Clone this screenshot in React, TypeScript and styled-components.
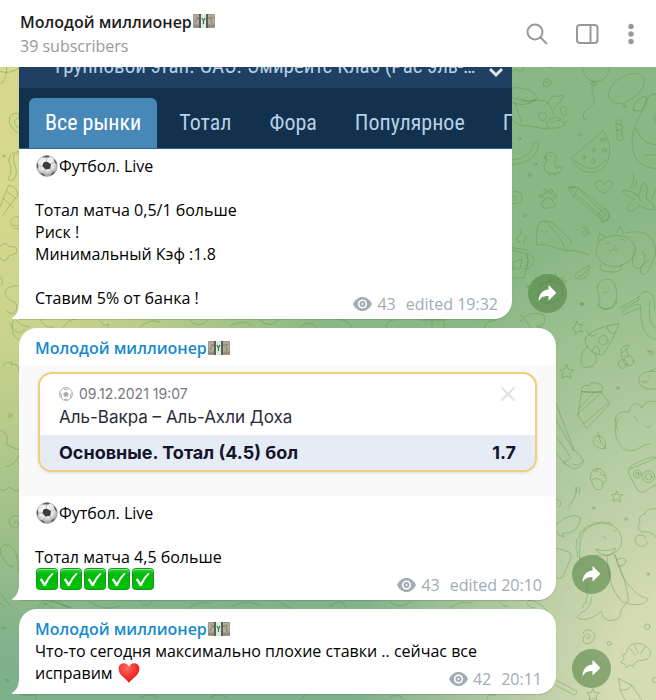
import React from "react";
import styled, { createGlobalStyle } from "styled-components";

const GlobalStyle = createGlobalStyle`
  * { box-sizing: border-box; }
  html, body, #root { height: 100%; }
  body { margin: 0; overflow: hidden; font-family: "Open Sans", "Noto Sans", sans-serif; font-size: 16px; line-height: 22px; color: #000; }
  button { font: inherit; border: 0; padding: 0; background: none; cursor: pointer; }
`;

const Page = styled.div`
  display: flex;
  flex-direction: column;
  height: 100vh;
  overflow: hidden;
`;

const Header = styled.header`
  display: flex;
  align-items: center;
  justify-content: space-between;
  height: 67px;
  flex: none;
  padding: 0 19px 0 20px;
  background: #fff;
`;

const ChannelTitle = styled.h1`
  margin: 0;
  font-size: 16px;
  line-height: 24px;
  font-weight: 600;
  color: #1c1c1c;
`;

const Subscribers = styled.p`
  margin: 0;
  line-height: 24px;
  color: #999;
`;

const Actions = styled.nav`
  display: flex;
  align-items: center;
  gap: 26px;
`;

const IconButton = styled.button`
  display: flex;
  color: #999;
`;

const Chat = styled.main`
  position: relative;
  flex: 1;
  min-height: 0;
  overflow: hidden;
  background:
    radial-gradient(ellipse 54% 82% at 0% 10%, #d5d88d 15%, rgba(213, 216, 141, 0.85) 40%, rgba(213, 216, 141, 0) 100%),
    radial-gradient(ellipse 50% 78% at 104% 100%, #d5dbb2 22%, rgba(213, 219, 178, 0) 100%),
    linear-gradient(#89b884 45%, #7eb08c);
`;

const Doodles = styled.svg<{ $side: "left" | "right" }>`
  position: absolute;
  top: 0;
  ${(p) => p.$side}: 0;
  fill: none;
  stroke: #4f8b3d;
  stroke-opacity: 0.36;
  stroke-width: 3;
  stroke-linecap: round;
  stroke-linejoin: round;
`;

const Messages = styled.div`
  position: relative;
  display: flex;
  flex-direction: column;
  gap: 9px;
  padding: 0 45px 6px 19px;
`;

const MessageRow = styled.article`
  display: flex;
  align-items: flex-end;
  gap: 16px;
`;

const Bubble = styled.div<{ $narrow?: boolean; $continued?: boolean }>`
  position: relative;
  width: 100%;
  max-width: ${(p) => (p.$narrow ? 493 : 537)}px;
  background: #fff;
  border-radius: ${(p) => (p.$continued ? "0 0 18px 0" : "18px 18px 18px 0")};
  box-shadow: 0 1px 1px rgba(60, 100, 60, 0.25);
`;

const Tail = styled.svg`
  position: absolute;
  left: -7px;
  bottom: 0;
  fill: #fff;
`;

const Author = styled.h2`
  margin: 0;
  padding: 9px 17px 0 16px;
  font-size: 16px;
  line-height: 22px;
  font-weight: 600;
  color: #168acd;
`;

const Text = styled.div<{ $spaced?: boolean }>`
  padding: ${(p) => (p.$spaced ? 6 : 0)}px 17px 0 16px;
  line-height: 22px;
`;

const Line = styled.p`
  margin: 0;
  min-height: 22px;
`;

const EmojiSvg = styled.svg`
  display: inline-block;
  width: 22px;
  height: 22px;
  margin: 0 1px;
  vertical-align: top;
`;

const Meta = styled.footer`
  display: flex;
  align-items: center;
  justify-content: flex-end;
  gap: 10px;
  margin-top: -16px;
  padding: 0 14px 4px;
  color: #a0acb6;
`;

const Views = styled.span`
  display: flex;
  align-items: center;
  gap: 5px;
`;

const ShareButton = styled.button`
  display: flex;
  align-items: center;
  justify-content: center;
  flex: none;
  width: 39px;
  height: 39px;
  margin-bottom: 6px;
  border-radius: 50%;
  background: rgba(77, 126, 62, 0.55);
  color: #fff;
`;

const Sportsbook = styled.section`
  font-family: "Roboto Condensed", Roboto, sans-serif;
  font-size: 22px;
  background: #12314e;
  color: #b7cfe3;
  overflow: hidden;
`;

const Tournament = styled.div`
  display: flex;
  align-items: flex-end;
  justify-content: space-between;
  height: 21px;
  padding: 0 9px 9px 36px;
  background: #1f3f63;
  font-size: 21px;
  line-height: 26px;
  white-space: nowrap;
`;

const Markets = styled.div`
  display: flex;
  gap: 6px;
  padding: 10px 0 0 10px;
  height: 61px;
  border-bottom: 1px solid #2d6a9a;
  white-space: nowrap;
`;

const Market = styled.button<{ $active?: boolean }>`
  flex: none;
  padding: 0 16px;
  border-radius: 6px 6px 0 0;
  background: ${(p) => (p.$active ? "#4888b9" : "transparent")};
  color: ${(p) => (p.$active ? "#fff" : "#b7cfe3")};
`;

const BetPhoto = styled.section`
  margin-top: 6px;
  padding: 7px 19px 24px;
  background: #f9f9f9;
  font-family: Inter, sans-serif;
`;

const BetCard = styled.div`
  overflow: hidden;
  height: 100px;
  border: 2px solid #efce7c;
  border-radius: 14px;
  background: #fff;
  box-shadow: 0 1px 3px rgba(0, 0, 0, 0.12);
`;

const BetTop = styled.div`
  display: flex;
  justify-content: space-between;
  height: 61px;
  padding: 9px 19px 0 19px;
`;

const BetDate = styled.div`
  display: flex;
  align-items: center;
  gap: 6px;
  font-size: 14px;
  color: #77777f;
`;

const Teams = styled.div`
  font-size: 17px;
  line-height: 24px;
  color: #2b2b3a;
`;

const CloseButton = styled.button`
  align-self: flex-start;
  display: flex;
  padding: 3px 0;
  color: #e2e2e2;
`;

const BetOutcome = styled.div`
  display: flex;
  justify-content: space-between;
  align-items: center;
  height: 35px;
  padding: 0 19px;
  background: #e6ecf5;
  font-size: 18px;
  font-weight: 700;
  color: #14142b;
`;

function Money() {
  return (
    <EmojiSvg viewBox="0 0 22 22" role="img" aria-label="dollar banknotes">
      <rect x="0" y="4" width="22" height="14" rx="1" fill="#a0968a" />
      <rect x="1" y="5" width="20" height="10" fill="#b5ab9c" />
      <path d="M2 13c1-4 3-5 5-5M3 7l3 2M15 8c3 0 4 3 4 6M17 7l3 1" stroke="#80755f" strokeWidth="1" fill="none" />
      <path d="M0 16.500h22M0 15h22" stroke="#8b806c" strokeWidth=".7" />
      <rect x="6" y="4" width="9" height="14" fill="#56605a" />
      <rect x="8" y="4" width="5" height="14" fill="#dcecdc" />
      <path d="M9 8l1.500 3L12 8M10.500 11v3" stroke="#47704b" strokeWidth="1.200" fill="none" />
    </EmojiSvg>
  );
}

function Ball() {
  return (
    <EmojiSvg viewBox="0 0 22 22" role="img" aria-label="football">
      <defs>
        <radialGradient id="ballShade" cx=".45" cy=".35" r=".65">
          <stop offset="0" stopColor="#fff" />
          <stop offset=".6" stopColor="#e4e4e4" />
          <stop offset="1" stopColor="#999" />
        </radialGradient>
      </defs>
      <circle cx="11" cy="11" r="10.4" fill="url(#ballShade)" stroke="#8d8d8d" strokeWidth=".5" />
      <path d="M10.500 6.500l4.500 2.500-.8 4.800-4.800.8L6.300 11l1.200-3.500z" fill="#3c3c3c" />
      <path d="M6 2.200Q10-.4 14 1.200L12.500 2.400 8.500 2.600zM18 4q2.800 2.500 3 6l-1.600-1.600-1.500-3zM1 8.500L2 8l.4 4-1 2Q.4 11.500 1 8.500zM4 17.800l2.600.6 2.300 1.800-.5 1Q6 20.700 4 17.800zM15.500 18.300l2.800-1.800.8.300q-1.300 2.700-3.800 3.700z" fill="#5a5a5a" />
      <path d="M10.500 6.500V3M15 9l3-1.500M14.200 13.800l2 3.400M9.400 14.600L8 18.400M6.300 11H3" stroke="#aaa" strokeWidth=".7" />
    </EmojiSvg>
  );
}

function Check() {
  return (
    <EmojiSvg viewBox="0 0 22 22" role="img" aria-label="done">
      <defs>
        <linearGradient id="checkFill" x2="0" y2="1">
          <stop offset="0" stopColor="#35cf3f" />
          <stop offset=".3" stopColor="#00b90a" />
          <stop offset="1" stopColor="#00c400" />
        </linearGradient>
      </defs>
      <rect x=".5" y=".5" width="21" height="21" rx="3" fill="url(#checkFill)" stroke="#119a1b" />
      <path d="M1.500 3.500q0-2 2-2h15q2 0 2 2" stroke="#7fe487" fill="none" />
      <path d="M3.800 11.500l2-1.300 3 4.500q3-6.200 7.300-9.700l1.500.8Q12.500 11 9.600 18L8 18.200z" fill="#fff" />
    </EmojiSvg>
  );
}

function Heart() {
  return (
    <EmojiSvg viewBox="0 0 22 22" role="img" aria-label="heart">
      <defs>
        <radialGradient id="heartFill" cx=".4" cy=".25" r=".8">
          <stop offset="0" stopColor="#ff6d5e" />
          <stop offset=".55" stopColor="#f3332f" />
          <stop offset="1" stopColor="#c9141b" />
        </radialGradient>
      </defs>
      <path d="M11 20.800C8 16.500 1 13.800.6 7 .3 3.500 2.800 1.200 5.800 1.200 8.200 1.200 10.300 2.600 11 5c.7-2.400 2.800-3.800 5.200-3.800 3 0 5.500 2.300 5.200 5.800-.4 6.800-7.400 9.500-10.400 13.800z" fill="url(#heartFill)" />
    </EmojiSvg>
  );
}

function MessageMeta({ views, edited, time }: { views: number; edited?: boolean; time: string }) {
  return (
    <Meta>
      <Views>
        <svg width="19" height="14" viewBox="0 0 19 14" aria-label="views">
          <path d="M0 7C2 2.700 5.500 0 9.500 0S17 2.700 19 7c-2 4.300-5.500 7-9.500 7S2 11.300 0 7z" fill="#a0acb6" />
          <circle cx="9.500" cy="7" r="4.600" fill="#fff" />
          <circle cx="9.500" cy="7" r="3" fill="#a0acb6" />
          <circle cx="9.500" cy="7" r="1" fill="#fff" />
        </svg>
        {views}
      </Views>
      <time>{edited ? `edited ${time}` : time}</time>
    </Meta>
  );
}

function Share() {
  return (
    <ShareButton aria-label="Share">
      <svg width="19" height="17" viewBox="0 0 19 17" fill="currentColor">
        <path d="M10.500.8Q10.500 0 11.200.6l6.600 6.600q.6.6 0 1.200l-6.600 6.500q-.7.600-.7-.2v-3.600C6 11 3 12.500 1.400 15.200.8 16 .400 15.700.5 15 1.200 8.500 5 5 10.500 4.500z" />
      </svg>
    </ShareButton>
  );
}

function BubbleTail() {
  return (
    <Tail width="8" height="18" viewBox="0 0 8 18" aria-hidden="true">
      <path d="M8 0H7v2C7 9 5 14 .5 16.500Q-.5 18 1 18h7z" />
    </Tail>
  );
}

function RightDoodles() {
  return (
    <Doodles $side="right" width="146" height="633" viewBox="510 67 146 633" aria-hidden="true">
      <g transform="translate(510 60) scale(.33333)">
        <path d="M4 34l16-5 10 8 12-6-4-10M114 20q10 8 18 0M100 62c8-10 26-4 22 8s-22 14-22 2 14-10 12-2" />
        <path d="M217 20c0 25 20 45 41 45s41-20 41-45M246 66l8 0 6 10-18-2 6-9M250 75c-12 20 6 30 3 48s-32 26-33 42 6 14 10 14" />
        <path d="M336 130c-30 4-46-14-38-38s40-52 76-52 34 34 14 58q-18 22-40 26l-2 18zM322 112h1M340 94h1M364 72h1M384 68h1M360 100h1" />
        <path d="M0 85c30-6 74 4 80 24s-40 14-80 2M0 125q40 20 76-4M14 125l20 62M36 122l22 4 20-6 28 2q20 16 26 44M108 132q10-4 20-24 18 4 33-4-4 18-32 44M0 172q20 30 60 26l50 10" />
        <path d="M110 186q20-24 46-6l8 14q-14 14-48 10zM98 182l-10-8q-6-18 10-18 14 2 10 20zM160 168q-12-14-6-28 20-8 14 22zM116 206l-8-2M162 190l14-8M122 186q6 5 10 0M140 182q6 4 10-1" />
        <path d="M317 185q8-12 18 0l-4 8q12 6 2 16 10 8 2 14l6 12q-8 12-20 2l2-14q-10-6 0-16-10-8-2-14zM320 192l14 3M318 210l16 3" />
        <path d="M278 212L184 295c20 50 80 52 100 24s22-72-6-107zM190 296c40 42 78 34 98 2" />
        <ellipse cx="279" cy="239" rx="7" ry="4" /><ellipse cx="283" cy="271" rx="6" ry="5" /><ellipse cx="251" cy="271" rx="4" ry="6" /><ellipse cx="221" cy="292" rx="4" ry="7" /><ellipse cx="250" cy="304" rx="5" ry="7" />
        <path d="M438 102q-24-2-30 28l-30 60c-30 80 0 135 60 135M370 150q-3-16 14-28 16-20 26-10 0 12-12 38-18 6-28 0zM378 206q20 48 60 48M404 285h34M438 165q-10 18 0 24" />
        <circle cx="209" cy="224" r="5" /><circle cx="28" cy="236" r="4" /><circle cx="76" cy="313" r="4" /><circle cx="59" cy="345" r="5" /><circle cx="45" cy="466" r="5" /><circle cx="52" cy="679" r="4" /><circle cx="215" cy="732" r="4" />
        <path d="M0 300c40 0 68-20 70-53h16c-2 45-36 67-86 66M110 303q-10-30 16-26 20 10 8 28 8 18 22 14c4 12-14 26-30 22-26 0-30-24-16-38zM110 288l-10 4 10 6M118 342v9M134 342v9M132 318q6 10 16 4M124 290h1" />
        <path d="M283 400c-60-26-6-54 0-26 14-26 46-4 0 26zM100 422c8-16 28-10 30 6 10 8 4 18-6 14-24 8-38-2-24-20z" />
        <ellipse cx="93" cy="409" rx="5" ry="6" /><ellipse cx="106" cy="395" rx="5" ry="7" /><ellipse cx="123" cy="394" rx="5" ry="7" /><ellipse cx="135" cy="408" rx="5" ry="6" />
        <path d="M176 382l28 0 90 72-18 24-86-70zM204 382l-12 26M208 390l76 70M196 402l82 70M294 454c10 14-6 32-20 30l-6-10M286 446q-20 4-22 24M298 462q4 20-20 24M180 383l8 8 5-10z" />
        <path d="M0 400c20-14 40 0 36 16s-22 18-36 12M0 410c20-6 24 8 12 12" />
        <path d="M370 340q4 26-8 44M380 364q0 14-10 22M338 392q20-4 50 16 2-30 14-38c12 2 10 20 6 46 20 10 26 22 24 32-12 4-32-6-46-12-10 14-22 20-30 16-8-10 8-26 16-34-14-6-32-14-34-26zM376 404q10 4 18 20M438 390l-14 26" />
        <path d="M80 552q-4-46 10-66 34-10 50 16 18 10 46 44l-14 16M106 484q36 30 64 88M94 514q10 8 16 0M76 556q30-6 50 4l46 14q26-6 38 4 16 0 26 6M216 504c8-6 24 0 20 14s-26 8-18-2 14-2 10 2" />
        <path d="M30 506q10 12-4 22t6 22M46 524q6 10-2 18t0 12M0 570l52 12q4 40-12 72H0M0 562l52 8M50 582c20-4 26 22 14 36-8 10-18 10-20 8M50 592c12 0 10 24-2 26M10 606l26-8-6 30-10-6-10 8z" />
        <path d="M268 544c16-20 84-30 104 10 20 38-30 66-60 66-40-2-70-40-44-76zM264 542l4-24 16 12M318 520l12-20 12 22M288 552q8-8 14 0M330 540q8-8 14 0M314 556l-4 12q-8 8-14 4M310 568q8 8 14-2M348 518q50-10 70 12 26 26 16 60c-14 44-30 60-42 50q-6-24 26-40M374 568q-16 50 6 58 20 2 24-26 4-14-6-26M272 614c-10 18 10 22 34 22s34-10 26-22" />
        <path d="M196 648q4-16 20-18l22-14q-2 36-20 40-10 4-24-2M206 650q14 0 26-22M262 680c6-30 50-30 54 0 10 24 0 66-22 66-20 0-32-6-30-16 6 2 8-20 2-28-4-8-4-14-4-22zM280 686h1M296 684h1M282 696q6 8 12 0M384 722q2-24 24-28 30 4 26 56M388 710l-60 35M388 720l-50 26" />
        <path d="M92 672q20-16 60 0c24 36-20 60-40 58-30-6-34-30-20-58zM92 672l34-10-10-14 16 12 4-20 8 20 16-10-4 14 14-2-14 10M100 690h2M120 684h2M140 690h2M110 710h2" />
      </g>
      <g transform="translate(520 300) scale(.33333)">
        <path d="M236 14q8 18 30 14 24-10 24-28M304 40q40-36 58-26M310 44l52-20M362 20c0 60 10 90 46 98M390 0q-10 70 18 86" />
        <circle cx="185" cy="12" r="4" /><circle cx="294" cy="264" r="4" /><circle cx="220" cy="624" r="4" /><circle cx="318" cy="657" r="4" /><circle cx="384" cy="822" r="4" /><circle cx="382" cy="980" r="8" /><circle cx="268" cy="1030" r="6" /><circle cx="405" cy="1140" r="8" />
        <path d="M170 64l6 10 12-1-7 11 6 11-12-2-8 10-2-13-10-6 11-6zM140 194l5 14 16 2-12 10 4 14-14-6-12 6 2-15-8-10 13-2zM290 574l4 10 14 0-10 9 3 12-12-6-10 5 2-12-6-8 11-1z" />
        <path d="M196 114q24-32 102-44-18 50-50 96l-24-6q-34-20-28-46zM200 92q14 30 32 8M262 78q0 28 24 22M216 156c2-26 28-20 22 6" /><circle cx="250" cy="121" r="14" />
        <path d="M204 140c-26 14-28 60-8 62 32 4 40-28 28-44" />
        <circle cx="308" cy="192" r="13" /><circle cx="326" cy="183" r="15" />
        <path d="M308 178q-8-20-4-30 8-14 24-12-8 16-22 22M326 168q-6-14-8-24M380 150l24 8M386 154l6 12M390 152l8 14" />
        <path d="M0 44q34 30 32 50M0 64q28-34 70-20 16 30-20 36 30 0 26 26-20 12-50-14M110 130q-10 8-2 16" />
        <path d="M408 214q-52-4-53 32 10 24 53 22M366 246h6M384 228h5M372 244q6 8 12-2M390 214l18-10" />
        <path d="M184 274q-2-20 22-18 10-14 30-4 16 0 10 22-20 6-62 0zM186 276l58 0 26 36-70 74-26-40zM246 276l-72 66M222 276l-46 52M266 308l-76 64" />
        <path d="M286 362c-2-20 20-30 40-26 8-30 32-30 40-12 10-24 34-20 42-20M286 362c-4 50 10 88 46 90 30-2 30-20 60-20M292 390q-6-20 2-34M342 348l10 16M374 376q10 12 20 0" />
        <path d="M108 310q30 80 56 144M108 460l30 34M108 410q34 44 42 60M108 360q40 70 52 90M156 448q24 10 34 36c0 12-20 24-32 22l-28-18M154 472q-12 12-22 14M190 482q-14 20-32 10" />
        <path d="M236 404l-2-6M236 408c24 6 20 22 20 38-26 2-42-14-34-30 4-6 8-8 14-8zM236 408q4 20 20 38M212 540c-6-44 40-46 46-6 4 12-6 14-10 14 6 28-28 28-32 0zM220 512q18 6 12-6M244 516q-8 12 12 10M216 540q14-12 32 4" />
        <path d="M408 472q-22-4-68 22-20 10-12 30l26 48q8 8 20 2l34-20M328 508l80-34" /><circle cx="352" cy="522" r="12" /><circle cx="386" cy="530" r="18" /><circle cx="386" cy="530" r="10" /><circle cx="352" cy="522" r="5" />
        <path d="M168 560q4 30-22 60M178 562v20M170 562v16M108 596q26 10 8 26M108 674q46-42 74-20-6 48-54 46l4 10-14-4-6-12M408 626q-36 0-32 16-24 4-16 26-14 18 6 28 30-4 42 16M378 716c-4-20-38-10-32 6 4 28 40 16 36 4" />
        <path d="M180 780c-4-60 0-100 60-110 70-4 80 70 46 86q-20 16-60 10M228 748q30 10 58-4-4 20-24 22-24-2-34-18M250 708l8 10M280 688l6 8M286 764q14 68 46 98 24 28 52 34c0 14-36 24-64 14-24 18-14 36-26 46-30 12-44 4-50-22-30 26-62 30-72 18 8-22 42-14 42-60" />
        <path d="M262 770q0 90 40 130 10 12 24 4-10-80-44-140M290 780q20-12 28 0-2 20-24 18" />
        <path d="M180 774q-14-8-6-20-12-8-2-20-6-18 6-22-2-20 14-20 2-18 20-14 10-16 22-8 12-10 22 0 12-8 20 4M206 850q-10 8-2 20-8 10 0 18-12 10-2 20-14 0-14 16" />
        <path d="M108 744l40 12q10 10 4 20l-24 56q-8 8-20 0M0 900q50-10 88 40M60 900q-30-10-40 10 10 16 24 14" />
        <path d="M190 1000c0-20 36-10 34 10s-36 32-34 8 24-16 20-6-12 2-10-2" />
        <path d="M318 1060c10-50 70-30 74 0-4 30-40 14-48 30l-6 10-10-6-8 10-6-12-12-4 10-12-4-10zM330 1046l16 20M344 1034l10 26M376 1040l-14 20" />
        <path d="M108 1140l62 34q0 12-10 10l-52-28M296 1136l40 20 30 44M296 1136l6 40 14 24M302 1170q20 4 34-14M220 1166l4 12 14 0-10 9 3 12-12-4-12 4 2-12-8-8 13-2z" />
      </g>
    </Doodles>
  );
}

function LeftDoodles() {
  return (
    <Doodles $side="left" width="510" height="633" viewBox="0 67 510 633" aria-hidden="true">
      <g transform="translate(0 60) scale(.33333)">
        <path d="M20 22q0 44-20 50M0 34q30 10 56-10M56 160q-28-4-28 20t28 40M56 160v16q-16 2-12 14t12 12M26 300q10-30 20-20c-20 20 20 50-6 80q-20 4-14-8 14-20 0-52zM0 440l26-64q30 6 26 30L8 466M10 416l30 26M20 394l28 22" />
        <circle cx="12" cy="288" r="3" /><circle cx="54" cy="278" r="4" /><circle cx="50" cy="488" r="18" />
        <path d="M42 484h1M54 482h1M40 494q10 10 18-2M0 560q12-20 28 0 26-4 22 16c-10 16-24 0-28 22q-10 10-22-4M0 650q14 10 4 26M56 678c-30-4-50 16-36 34s30 6 30 30-20 22-30 10M30 790q20 46 46 18M40 780q-14 60 30 60M10 920c0-14 20-18 26-6q20-8 20 20M36 914l-2-10" />
      </g>
      <g transform="translate(0 380) scale(.33333)">
        <circle cx="30" cy="107" r="5" /><circle cx="10" cy="744" r="4" /><circle cx="21" cy="902" r="4" />
        <path d="M0 150q30 10 20 44l36 16M56 226q-8 30-38 34M0 330q20 4 28-10 20 20 28 10M56 408c-30-8-38 28-14 36q14 0 14-12c0-10-14-10-14 0M0 520q0-34 26-24 30 10 30 80M0 520q30 50 40 40M0 640l34 40M0 670q10 0 14 14M56 940q0-14 56-8 0 16-4 28M68 946h40M100 910q0-14 20-8" />
        <path d="M110 686q20-40 60-20l40 20M130 670l30 14M180 662q10 20 30 20" />
      </g>
      <g strokeWidth="1">
        <path d="M16 320q4 6 14 7M40 319q4 10 14 8M62 328q8-10 14-9M100 321l4 4 5-1-2 4M140 327q10-9 20-5M190 320q8 10 18 0M230 326q14-8 22 0M260 320q10 10 20-1M300 327q10-8 16 0M340 319q12 4 12 9M386 327q0-7 8-7M420 320h24v8M432 320v8M484 328q2-8 12-8" />
        <path d="M42 608q5-10 18-4l12 4M90 602q14 10 30 4M140 601q6 10 12 0M190 608q4-7 20-5M232 606q18-8 28 0M280 602l10 6M330 607q4-6 12-5l4 5M390 602q10 8 20 0M450 608q10-8 22-5M500 602q4 6 8 4" />
        <path d="M140 698q10-6 18 0M210 697q8-4 16 0M300 699l6-4M486 699q2-6 10-4M390 697q10-4 14 2" />
      </g>
    </Doodles>
  );
}

export default function App() {
  return (
    <Page>
      <GlobalStyle />
      <Header>
        <div>
          <ChannelTitle>Молодой миллионер<Money /></ChannelTitle>
          <Subscribers>39 subscribers</Subscribers>
        </div>
        <Actions aria-label="Chat actions">
          <IconButton aria-label="Search">
            <svg width="24" height="24" viewBox="0 0 24 24" fill="none" stroke="currentColor" strokeWidth="2" strokeLinecap="round">
              <circle cx="10" cy="10" r="7.500" />
              <path d="M15.500 15.500l6 6" />
            </svg>
          </IconButton>
          <IconButton aria-label="Toggle side panel">
            <svg width="24" height="24" viewBox="0 0 24 24" fill="none" stroke="currentColor" strokeWidth="2">
              <rect x="2" y="3" width="20.500" height="18" rx="3" />
              <path d="M15.500 3v18" />
            </svg>
          </IconButton>
          <IconButton aria-label="More">
            <svg width="12" height="24" viewBox="0 0 12 24" fill="currentColor">
              <circle cx="6" cy="4.500" r="2.700" />
              <circle cx="6" cy="12" r="2.700" />
              <circle cx="6" cy="19.500" r="2.700" />
            </svg>
          </IconButton>
        </Actions>
      </Header>
      <Chat>
        <LeftDoodles />
        <RightDoodles />
        <Messages>
          <MessageRow>
            <Bubble $narrow $continued>
              <Sportsbook>
                <Tournament>
                  <span>Групповой этап. ОАЭ. Эмирейтс Клаб (Рас эль-…</span>
                  <svg width="14" height="24" viewBox="0 0 14 24" fill="none" stroke="#dbe8f3" strokeWidth="3">
                    <path d="M1 14l6 6 6-6" />
                  </svg>
                </Tournament>
                <Markets>
                  <Market $active>Все рынки</Market>
                  <Market>Тотал</Market>
                  <Market>Фора</Market>
                  <Market>Популярное</Market>
                  <Market>П</Market>
                </Markets>
              </Sportsbook>
              <Text $spaced>
                <Line><Ball />Футбол. Live</Line>
                <Line />
                <Line>Тотал матча 0,5/1 больше</Line>
                <Line>Риск !</Line>
                <Line>Минимальный Кэф :1.8</Line>
                <Line />
                <Line>Ставим 5% от банка !</Line>
              </Text>
              <MessageMeta views={43} edited time="19:32" />
              <BubbleTail />
            </Bubble>
            <Share />
          </MessageRow>
          <MessageRow>
            <Bubble>
              <Author>Молодой миллионер<Money /></Author>
              <BetPhoto>
                <BetCard>
                  <BetTop>
                    <div>
                      <BetDate>
                        <svg width="14" height="14" viewBox="0 0 14 14" fill="none" stroke="#aaaab0">
                          <circle cx="7" cy="7" r="6.400" />
                          <path d="M7 5l2.200 1.600-.8 2.600H5.600l-.8-2.600z" fill="#aaaab0" />
                          <path d="M4.500 1.500L7 3l2.500-1.500M1 6l1.500 2L2 11M13 6l-1.500 2 .5 3M5 13l2-1 2 1" />
                        </svg>
                        <time>09.12.2021 19:07</time>
                      </BetDate>
                      <Teams>Аль-Вакра – Аль-Ахли Доха</Teams>
                    </div>
                    <CloseButton aria-label="Remove bet">
                      <svg width="16" height="16" viewBox="0 0 16 16" fill="none" stroke="currentColor" strokeWidth="2" strokeLinecap="round">
                        <path d="M2 2l12 12M14 2L2 14" />
                      </svg>
                    </CloseButton>
                  </BetTop>
                  <BetOutcome>
                    <span>Основные. Тотал (4.5) бол</span>
                    <span>1.7</span>
                  </BetOutcome>
                </BetCard>
              </BetPhoto>
              <Text $spaced>
                <Line><Ball />Футбол. Live</Line>
                <Line />
                <Line>Тотал матча 4,5 больше</Line>
                <Line><Check /><Check /><Check /><Check /><Check /></Line>
              </Text>
              <MessageMeta views={43} edited time="20:10" />
              <BubbleTail />
            </Bubble>
            <Share />
          </MessageRow>
          <MessageRow>
            <Bubble>
              <Author>Молодой миллионер<Money /></Author>
              <Text>
                Что-то сегодня максимально плохие ставки .. сейчас все исправим <Heart />
              </Text>
              <MessageMeta views={42} time="20:11" />
              <BubbleTail />
            </Bubble>
            <Share />
          </MessageRow>
        </Messages>
      </Chat>
    </Page>
  );
}
